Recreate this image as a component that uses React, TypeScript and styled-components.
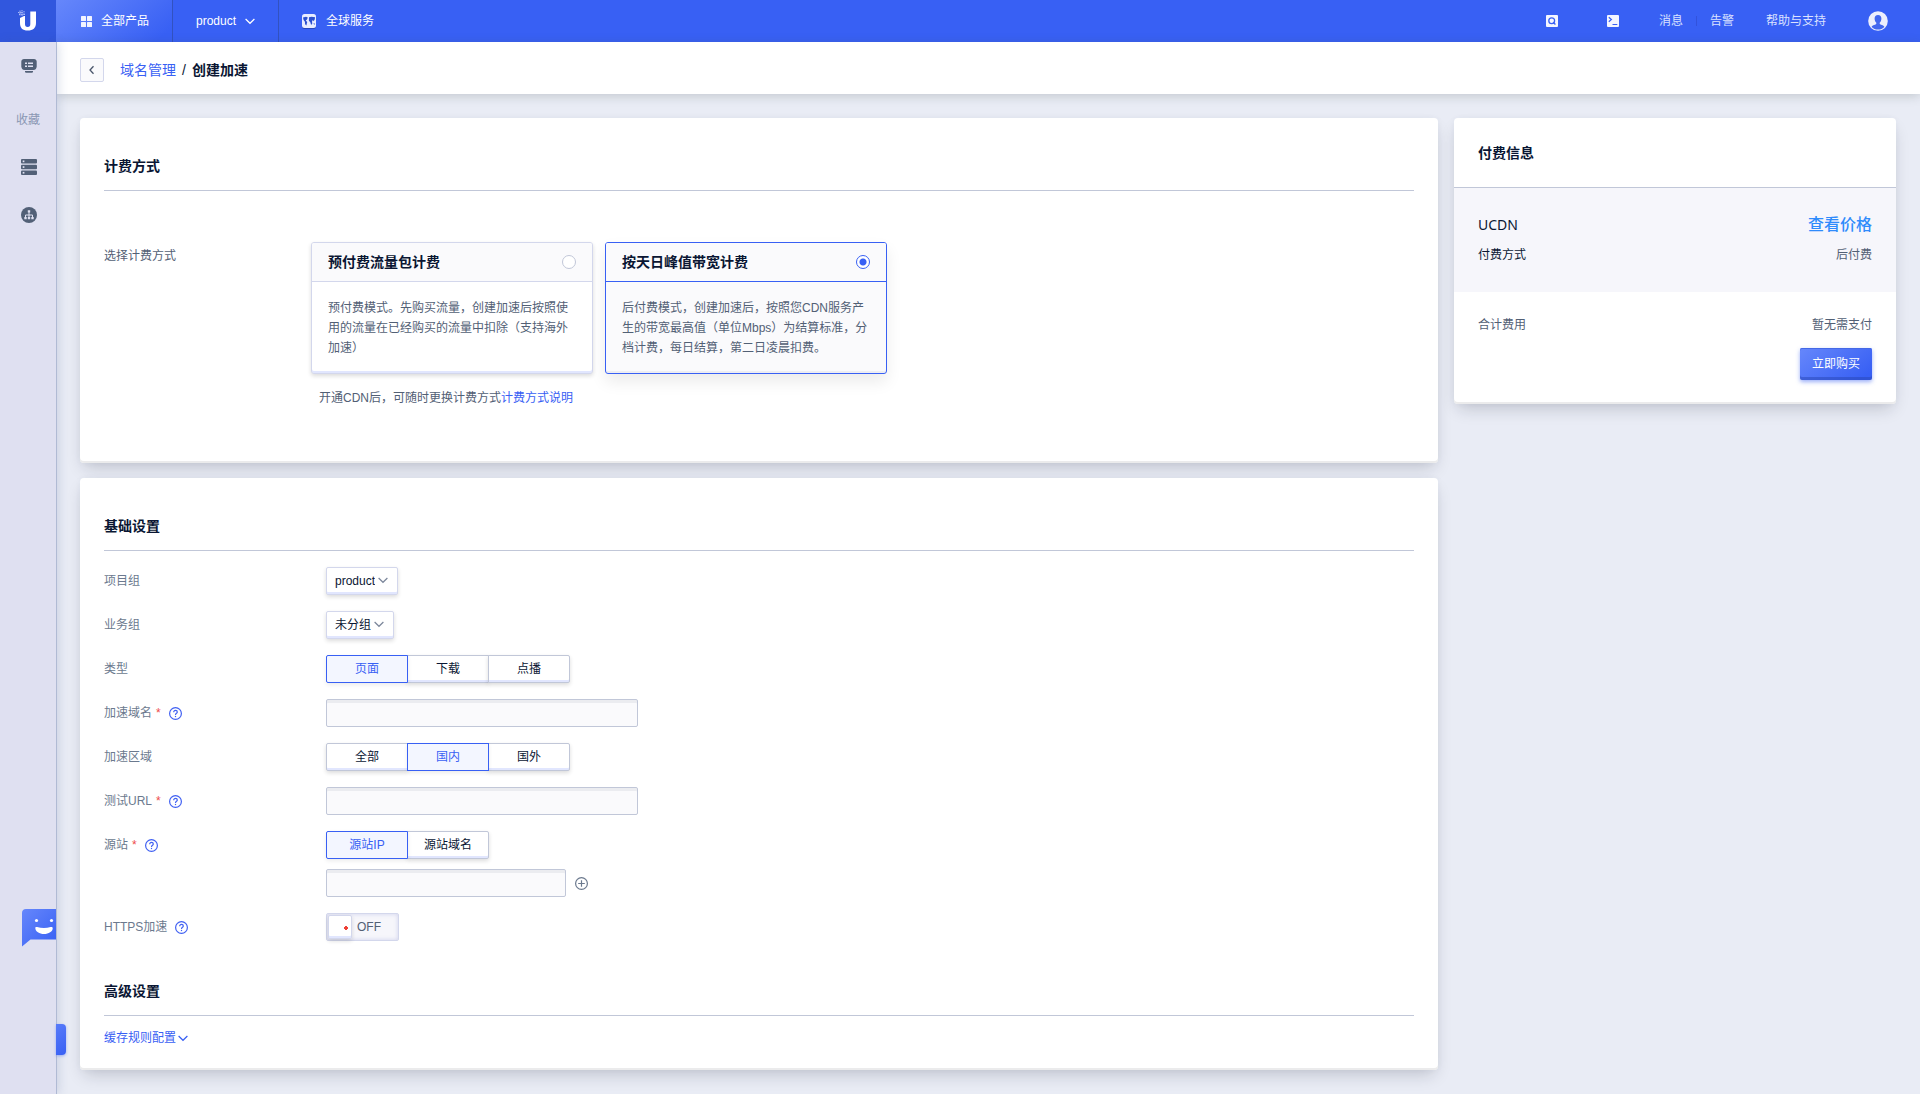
import React, { useState } from "react";
import styled, { createGlobalStyle, css } from "styled-components";

const color = {
  brand: "#3860f4",
  brandDark: "#3157de",
  link: "#3860f4",
  ink: "#0a1633",
  text: "#526075",
  muted: "#6b798e",
  line: "#c1c7d8",
  soft: "#d3d7ec",
  lip: "#e1e6fe",
  field: "#fafafc",
};

const brandGradient = "linear-gradient(140deg, #6687fb 0%, #3860f4 90%)";

const GlobalStyle = createGlobalStyle`
  *, *::before, *::after { box-sizing: border-box; }
  body {
    margin: 0;
    background: #e9ecf5;
    color: ${color.text};
    font-family: "Liberation Sans", "Noto Sans CJK SC", sans-serif;
    font-size: 12px;
    line-height: 20px;
  }
  button, input, select { font: inherit; color: inherit; }
  a { color: ${color.link}; text-decoration: none; }
  h1, h2, p { margin: 0; }
  svg { display: block; flex: none; }
`;

const Page = styled.div`
  display: flex;
  flex-direction: column;
  min-height: 100vh;
`;

const TopBar = styled.header`
  display: flex;
  height: 42px;
  background: ${color.brand};
  color: #e8ecff;
`;

const Logo = styled.a`
  display: flex;
  align-items: center;
  justify-content: center;
  width: 56px;
  background: ${color.brandDark};
`;

const TopButton = styled.button<{ $lit?: boolean; $divided?: boolean }>`
  display: flex;
  align-items: center;
  gap: 9px;
  padding: 0 23px;
  border: 0;
  border-right: ${(p) => (p.$divided ? "1px solid #3252c0" : "0")};
  background: ${(p) => (p.$lit ? brandGradient : "none")};
  color: #fff;
`;

const TopTools = styled.nav`
  display: flex;
  align-items: center;
  margin-left: auto;
  padding-right: 32px;
`;

const ToolButton = styled.button`
  display: flex;
  align-items: center;
  justify-content: center;
  width: 61px;
  height: 42px;
  padding: 0;
  border: 0;
  background: none;
`;

const ToolLinks = styled.div`
  display: flex;
  align-items: center;
  padding: 0 42px 0 15px;
`;

const ToolLink = styled.a<{ $wide?: boolean }>`
  color: #dbe2ff;
  margin-left: ${(p) => (p.$wide ? "32px" : "0")};
`;

const ToolDivider = styled.span`
  width: 1px;
  height: 10px;
  margin: 0 13px;
  background: #3252dc;
`;

const AvatarButton = styled.button`
  display: flex;
  padding: 0;
  border: 0;
  background: none;
`;

const Shell = styled.div`
  display: flex;
  flex: 1;
`;

const SideBar = styled.aside`
  position: relative;
  z-index: 2;
  display: flex;
  flex-direction: column;
  align-items: center;
  flex: none;
  width: 56px;
  background: #dfe0f1;
  box-shadow: 1px 0 0 #b0bad4, 2px 0 10px rgba(60, 80, 140, 0.2);
`;

const SideItem = styled.a`
  display: flex;
  align-items: center;
  justify-content: center;
  width: 100%;
  height: 48px;
  padding-left: 2px;
  color: #526077;
`;

const SideCaption = styled.span`
  padding: 20px 0 13px;
  color: #8a97b3;
`;

const ChatBubble = styled.button`
  position: absolute;
  right: 0;
  bottom: 146px;
  width: 34px;
  height: 40px;
  padding: 0;
  border: 0;
  background: none;
`;

const DrawerTab = styled.button`
  position: absolute;
  left: 56px;
  bottom: 39px;
  width: 10px;
  height: 31px;
  padding: 0;
  border: 0;
  border-radius: 0 4px 4px 0;
  background: linear-gradient(140deg, #587bf9, #3860f4);
  box-shadow: 0 1px 3px rgba(56, 96, 244, 0.4);
`;

const Main = styled.main`
  flex: 1;
  min-width: 0;
`;

const CrumbBar = styled.div`
  display: flex;
  align-items: center;
  height: 52px;
  padding: 4px 24px 0;
  background: #fff;
  box-shadow: 0 2px 10px rgba(60, 75, 70, 0.22);
  color: ${color.ink};
  font-size: 14px;
`;

const BackButton = styled.button`
  display: flex;
  align-items: center;
  justify-content: center;
  width: 24px;
  height: 24px;
  margin-right: 16px;
  padding: 0;
  border: 1px solid ${color.soft};
  border-radius: 2px;
  background: ${color.field};
`;

const Slash = styled.span`
  margin: 0 6px;
`;

const CrumbTitle = styled.h1`
  font-size: 14px;
  font-weight: 700;
`;

const Columns = styled.div`
  display: flex;
  align-items: flex-start;
  gap: 16px;
  padding: 24px;
`;

const Forms = styled.div`
  display: flex;
  flex-direction: column;
  flex: 1;
  gap: 15px;
  min-width: 0;
`;

const cardLook = css`
  border-radius: 4px;
  background: #fff;
  box-shadow: inset 0 -2px 0 #ebebec, 0 8px 16px -4px rgba(20, 24, 45, 0.2),
    0 0 6px rgba(60, 70, 100, 0.04);
`;

const Card = styled.section<{ $roomy?: boolean }>`
  ${cardLook}
  padding: ${(p) => (p.$roomy ? "36px 24px 55px" : "36px 24px 22px")};
`;

const SectionTitle = styled.h2<{ $later?: boolean }>`
  margin-top: ${(p) => (p.$later ? "40px" : "0")};
  padding: ${(p) => (p.$later ? "0 0 14px" : "2px 0 14px")};
  border-bottom: 1px solid ${color.line};
  color: ${color.ink};
  font-size: 14px;
  font-weight: 700;
`;

const PlanRow = styled.fieldset`
  display: grid;
  grid-template-columns: 207px 1fr;
  margin: 0;
  padding: 51px 0 0;
  border: 0;
`;

const PlanLabel = styled.span`
  padding-top: 4px;
`;

const Plans = styled.div`
  display: flex;
  flex-wrap: wrap;
  gap: 12px;
`;

const PlanCard = styled.label<{ $on: boolean }>`
  width: 282px;
  overflow: hidden;
  border: 1px solid ${(p) => (p.$on ? color.brand : color.soft)};
  border-radius: 3px;
  background: ${(p) => (p.$on ? color.field : "#fff")};
  box-shadow: ${(p) =>
    p.$on
      ? "inset 0 -2px 0 #eeeef2, 0 8px 16px rgba(0, 0, 0, 0.08)"
      : "inset 0 -2px 0 #e1e6fe, 0 2px 4px rgba(0, 0, 0, 0.14)"};
  cursor: pointer;
`;

const PlanHead = styled.span<{ $on: boolean }>`
  display: flex;
  align-items: center;
  justify-content: space-between;
  height: 39px;
  padding: 0 16px;
  border-bottom: 1px solid ${(p) => (p.$on ? color.brand : color.soft)};
  background: ${color.field};
  color: ${color.ink};
  font-size: 14px;
  font-weight: 700;
`;

const Radio = styled.input`
  appearance: none;
  width: 14px;
  height: 14px;
  margin: 0;
  border: 1px solid ${color.line};
  border-radius: 50%;
  background: #fff;
  &:checked {
    border-color: ${color.brand};
    background: radial-gradient(circle, ${color.brand} 3px, #fff 4px);
  }
`;

const PlanText = styled.span`
  display: block;
  padding: 16px 16px 15px;
`;

const PlanNote = styled.p`
  padding: 14px 8px 0;
`;

const Field = styled.div`
  display: grid;
  grid-template-columns: 222px 1fr;
  align-items: start;
  margin-top: 16px;
`;

const FieldLabel = styled.label`
  display: flex;
  align-items: center;
  height: 28px;
  color: ${color.muted};
`;

const Star = styled.span`
  margin-left: 4px;
  color: #ee4b4b;
`;

const Help = styled.button`
  display: flex;
  margin-left: 8px;
  padding: 0;
  border: 0;
  background: none;
`;

const raised = css`
  background: #fff;
  box-shadow: inset 0 -2px 0 ${color.lip}, 0 2px 4px rgba(0, 0, 0, 0.14);
`;

const SelectBox = styled.span`
  display: inline-grid;
  justify-self: start;
  align-items: center;
  > * {
    grid-area: 1 / 1;
  }
  > svg {
    justify-self: end;
    margin: 0 10px 3px 0;
    pointer-events: none;
  }
`;

const Select = styled.select`
  ${raised}
  appearance: none;
  field-sizing: content;
  height: 28px;
  padding: 0 22px 0 8px;
  border: 1px solid ${color.soft};
  border-radius: 2px;
  color: ${color.ink};
`;

const Segments = styled.div`
  display: flex;
`;

const Segment = styled.button<{ $on: boolean }>`
  ${raised}
  width: 82px;
  height: 28px;
  padding: 0;
  border: 1px solid ${color.line};
  color: ${color.ink};
  &:first-child {
    border-radius: 2px 0 0 2px;
  }
  &:last-child {
    border-radius: 0 2px 2px 0;
  }
  & + & {
    margin-left: -1px;
  }
  ${(p) =>
    p.$on &&
    css`
      z-index: 1;
      position: relative;
      border-color: ${color.brand};
      background: #f3f6ff;
      box-shadow: 0 2px 4px rgba(0, 0, 0, 0.08);
      color: ${color.brand};
    `}
`;

const TextInput = styled.input<{ $short?: boolean }>`
  width: ${(p) => (p.$short ? "240px" : "312px")};
  height: 28px;
  padding: 0 8px;
  border: 1px solid ${color.line};
  border-radius: 2px;
  outline: 0;
  background: ${color.field};
  box-shadow: inset 0 3px 0 #ebecf0;
`;

const Stack = styled.div`
  display: grid;
  gap: 10px;
`;

const InputLine = styled.div`
  display: flex;
  align-items: center;
  gap: 9px;
`;

const IconButton = styled.button`
  display: flex;
  padding: 0;
  border: 0;
  background: none;
`;

const Switch = styled.label`
  display: flex;
  align-items: center;
  justify-self: start;
  gap: 5px;
  width: 73px;
  height: 28px;
  padding: 0 1px;
  border: 1px solid ${color.soft};
  border-radius: 2px;
  background: #f6f6fb;
  box-shadow: inset 0 0 4px rgba(90, 100, 190, 0.25);
  cursor: pointer;
`;

const SwitchKnob = styled.input`
  ${raised}
  appearance: none;
  width: 24px;
  height: 24px;
  margin: 0;
  border: 1px solid ${color.soft};
  border-radius: 2px;
  background: radial-gradient(circle at 17px 12px, #ee4036 2px, #fff 2px);
  &:checked {
    background: radial-gradient(circle at 6px 12px, #2fbf71 2px, #fff 2px);
  }
`;

const MoreButton = styled.button`
  display: flex;
  align-items: center;
  gap: 2px;
  margin-top: 12px;
  padding: 0;
  border: 0;
  background: none;
  color: ${color.link};
`;

const Bill = styled.aside`
  ${cardLook}
  flex: none;
  width: 442px;
`;

const BillTitle = styled.h2`
  padding: 25px 24px 24px;
  border-bottom: 1px solid ${color.line};
  color: ${color.ink};
  font-size: 14px;
  font-weight: 700;
`;

const BillBody = styled.div`
  display: grid;
  gap: 10px;
  padding: 27px 24px;
  background: #f6f6fb;
  color: ${color.ink};
`;

const BillLine = styled.div`
  display: flex;
  align-items: center;
  justify-content: space-between;
`;

const ProductName = styled.span`
  font-family: "Noto Sans", sans-serif;
  font-size: 14px;
`;

const PriceLink = styled.a`
  color: #2f8bfb;
  font-size: 16px;
  font-weight: 500;
`;

const Quiet = styled.span`
  color: ${color.text};
`;

const BillFoot = styled.div`
  display: grid;
  gap: 13px;
  padding: 23px 24px 24px;
`;

const BuyButton = styled.button`
  justify-self: end;
  width: 72px;
  height: 32px;
  padding: 0 0 1px;
  border: 0;
  border-radius: 2px;
  background: ${brandGradient};
  box-shadow: inset 0 -3px 0 rgba(40, 70, 180, 0.5), inset 0 1px 0 #4468e6,
    0 2px 4px rgba(56, 96, 244, 0.5);
  color: #fff;
`;

const Chevron = ({ size = 10, stroke = "#7c879b" }) => (
  <svg width={size} height={size} viewBox="0 0 10 10" fill="none" stroke={stroke} strokeWidth="1.200">
    <path d="M0.600 3L5 7.300 9.400 3" />
  </svg>
);

const LogoMark = () => (
  <svg width="20" height="22" viewBox="0 0 20 22">
    <path
      d="M2 8l4-2h1v8c0 2 .8 3 2.700 3s2.600-1 2.600-3V1.500H18V13c0 5-3 7.500-8.200 7.500S2 18 2 13z"
      fill="#fff"
    />
    <path
      d="M2 .5v5M4 0v6M6 1v4M0 2.500h5M1 4.500h6"
      stroke="#c6d2ff"
      strokeWidth="0.800"
      strokeDasharray="1.500 0.700"
    />
  </svg>
);

const GridIcon = () => (
  <svg width="13" height="11" viewBox="-2 0 13 11" fill="#f2f4ff">
    <rect width="5" height="5" rx="0.500" />
    <rect x="6" width="5" height="5" rx="0.500" />
    <rect y="6" width="5" height="5" rx="0.500" />
    <rect x="6" y="6" width="5" height="5" rx="0.500" />
  </svg>
);

const MapIcon = () => (
  <svg width="15" height="15" viewBox="0 0 15 15">
    <rect y="1" width="14" height="14" rx="2.500" fill="#2747bb" />
    <rect width="14" height="14" rx="2.500" fill="#e9edff" />
    <path
      d="M1 3.500l3-.7 1.800.8-.8 1.900-1.200.9 1.400 1.600-.8 3.400-1.300-1.200-.2-2.500L1.600 6zM7 3.300l2.500-.6 3.600.5-.4 2.300-1 1.700-.9-1.300-.8 1.500.3 2.200-1.200 1.300-.8-2.600-1.400-1.500zM11.400 9.200l1.500.3-.6 1.500z"
      fill="#2c50cf"
    />
  </svg>
);

const SearchIcon = () => (
  <svg width="12" height="12" viewBox="0 0 12 12">
    <rect width="12" height="12" rx="1" fill="#f4f6ff" />
    <circle cx="5.700" cy="5.700" r="2.900" fill="none" stroke="#3860f4" strokeWidth="1.300" />
    <path d="M7.200 7.200l2.200 2.300" stroke="#3860f4" strokeWidth="1.300" />
  </svg>
);

const TerminalIcon = () => (
  <svg width="12" height="12" viewBox="0 0 12 12">
    <rect width="12" height="12" rx="1" fill="#f4f6ff" />
    <path d="M1.800 2.200l2.600 2.300-2.600 2.300M5.500 9.500h4.800" fill="none" stroke="#3860f4" strokeWidth="1.200" />
  </svg>
);

const AvatarIcon = () => (
  <svg width="20" height="20" viewBox="0 0 20 20">
    <circle cx="10" cy="10" r="9.800" fill="#eceffc" />
    <path
      d="M10 4c2.200 0 3.500 1.400 3.400 3.700-.1 1.900-.8 3.200-1.700 4v1c.3 1 4 1.200 4.700 3.300C14.800 17.700 12.500 18.600 10 18.600S5.200 17.700 3.600 16c.7-2.100 4.400-2.300 4.700-3.300v-1c-.9-.8-1.600-2.100-1.700-4C6.500 5.400 7.800 4 10 4z"
      fill="#4267ee"
    />
  </svg>
);

const MonitorIcon = () => (
  <svg width="16" height="15" viewBox="0 0 16 15">
    <path
      d="M3 0h10c1.600 0 2.600 1 2.700 2.700v4.600C15.600 9.500 14.500 11 12.500 11h-9C1.500 11 .4 9.500.3 7.300V2.700C.4 1 1.400 0 3 0z"
      fill="currentColor"
    />
    <path d="M4 12h8v1.200l-1.200.6H5.200L4 13.200z" fill="currentColor" />
    <path d="M4 4.200h2M7 4.200h5M4 7.200h2M7 7.200h5" stroke="#dfe0f1" strokeWidth="1.400" />
  </svg>
);

const ServerIcon = () => (
  <svg width="16" height="16" viewBox="0 0 16 16">
    {[0, 5.700, 11.400].map((y) => (
      <g key={y}>
        <rect y={y} width="16" height="4.600" rx="1" fill="currentColor" />
        <rect x="1.700" y={y + 1.500} width="1.700" height="1.700" fill="#dfe0f1" />
      </g>
    ))}
  </svg>
);

const NetworkIcon = () => (
  <svg width="16" height="16" viewBox="0 0 16 16">
    <circle cx="8" cy="8" r="8" fill="currentColor" />
    <path d="M8 4.500V11M4.500 11V8h7v3" fill="none" stroke="#dfe0f1" />
    <path
      d="M6.800 3.200h2.400v2.300H6.800zM3.300 10h2.400v2.200H3.300zM6.800 10h2.400v2.200H6.800zM10.300 10h2.400v2.200h-2.400z"
      fill="#dfe0f1"
    />
  </svg>
);

const ChatIcon = () => (
  <svg width="34" height="40" viewBox="0 0 34 40">
    <defs>
      <linearGradient id="chat" x1="0" y1="0" x2="1" y2="1">
        <stop offset="0" stopColor="#6687fb" />
        <stop offset="1" stopColor="#3860f4" />
      </linearGradient>
    </defs>
    <path d="M4 1h30v30.500H8.500L0 38.500V5c0-2.500 1.500-4 4-4z" fill="url(#chat)" />
    <circle cx="14.500" cy="12.500" r="1.600" fill="#fff" />
    <circle cx="29.500" cy="12.500" r="1.600" fill="#fff" />
    <path
      d="M13.300 20c0-1 .9-1.300 1.800-.9 4.300 1.300 9.200 1.300 13.500 0 1-.3 2 0 2.100.9.300 3.500-4.200 6-8.700 6s-8.700-2.500-8.700-6z"
      fill="#fff"
    />
  </svg>
);

const HelpIcon = () => (
  <svg width="13" height="13" viewBox="0 0 13 13" fill="none" stroke="#4060f2" strokeWidth="1.200">
    <circle cx="6.500" cy="6.500" r="5.900" />
    <path d="M4.700 5.200c0-1.200.8-1.800 1.800-1.800s1.800.6 1.800 1.600c0 1.300-1.800 1.400-1.800 2.900" />
    <path d="M6.500 8.900v1.200" />
  </svg>
);

const PlusIcon = () => (
  <svg width="13" height="13" viewBox="0 0 13 13" fill="none" stroke="#6b798e" strokeWidth="1.200">
    <circle cx="6.500" cy="6.500" r="5.900" />
    <path d="M6.500 3.200v6.600M3.200 6.500h6.600" />
  </svg>
);

const plans = [
  {
    id: "traffic",
    title: "预付费流量包计费",
    text: "预付费模式。先购买流量，创建加速后按照使用的流量在已经购买的流量中扣除（支持海外加速）",
  },
  {
    id: "peak",
    title: "按天日峰值带宽计费",
    text: "后付费模式，创建加速后，按照您CDN服务产生的带宽最高值（单位Mbps）为结算标准，分档计费，每日结算，第二日凌晨扣费。",
  },
];

function Label(props: { text: string; htmlFor?: string; id?: string; required?: boolean; help?: boolean }) {
  return (
    <FieldLabel htmlFor={props.htmlFor} id={props.id} as={props.htmlFor ? "label" : "span"}>
      {props.text}
      {props.required && <Star>*</Star>}
      {props.help && (
        <Help type="button" aria-label={`${props.text}说明`}>
          <HelpIcon />
        </Help>
      )}
    </FieldLabel>
  );
}

function Choice(props: { labelledBy: string; options: string[]; initial: string }) {
  const [value, setValue] = useState(props.initial);
  return (
    <Segments role="group" aria-labelledby={props.labelledBy}>
      {props.options.map((o) => (
        <Segment key={o} type="button" $on={o === value} aria-pressed={o === value} onClick={() => setValue(o)}>
          {o}
        </Segment>
      ))}
    </Segments>
  );
}

export default function App() {
  const [plan, setPlan] = useState("peak");
  const [https, setHttps] = useState(false);

  return (
    <Page>
      <GlobalStyle />
      <TopBar>
        <Logo href="#" aria-label="UCloud">
          <LogoMark />
        </Logo>
        <TopButton $lit $divided>
          <GridIcon />
          全部产品
        </TopButton>
        <TopButton $divided>
          product
          <Chevron stroke="#fff" />
        </TopButton>
        <TopButton>
          <MapIcon />
          全球服务
        </TopButton>
        <TopTools>
          <ToolButton aria-label="搜索">
            <SearchIcon />
          </ToolButton>
          <ToolButton aria-label="终端">
            <TerminalIcon />
          </ToolButton>
          <ToolLinks>
            <ToolLink href="#">消息</ToolLink>
            <ToolDivider />
            <ToolLink href="#">告警</ToolLink>
            <ToolLink href="#" $wide>
              帮助与支持
            </ToolLink>
          </ToolLinks>
          <AvatarButton aria-label="账户">
            <AvatarIcon />
          </AvatarButton>
        </TopTools>
      </TopBar>

      <Shell>
        <SideBar>
          <SideItem href="#" aria-label="控制台">
            <MonitorIcon />
          </SideItem>
          <SideCaption>收藏</SideCaption>
          <SideItem href="#" aria-label="主机">
            <ServerIcon />
          </SideItem>
          <SideItem href="#" aria-label="网络">
            <NetworkIcon />
          </SideItem>
          <ChatBubble aria-label="在线咨询">
            <ChatIcon />
          </ChatBubble>
          <DrawerTab aria-label="展开" />
        </SideBar>

        <Main>
          <CrumbBar>
            <BackButton aria-label="返回">
              <svg width="10" height="10" viewBox="0 0 10 10" fill="none" stroke="#4a566b" strokeWidth="1.300">
                <path d="M6.500 1.200L3 5l3.500 3.800" />
              </svg>
            </BackButton>
            <a href="#">域名管理</a>
            <Slash>/</Slash>
            <CrumbTitle>创建加速</CrumbTitle>
          </CrumbBar>

          <Columns>
            <Forms>
              <Card $roomy>
                <SectionTitle>计费方式</SectionTitle>
                <PlanRow aria-labelledby="plan-label">
                  <PlanLabel id="plan-label">选择计费方式</PlanLabel>
                  <div>
                    <Plans>
                      {plans.map((p) => (
                        <PlanCard key={p.id} $on={p.id === plan}>
                          <PlanHead $on={p.id === plan}>
                            {p.title}
                            <Radio type="radio" name="plan" checked={p.id === plan} onChange={() => setPlan(p.id)} />
                          </PlanHead>
                          <PlanText>{p.text}</PlanText>
                        </PlanCard>
                      ))}
                    </Plans>
                    <PlanNote>
                      开通CDN后，可随时更换计费方式<a href="#">计费方式说明</a>
                    </PlanNote>
                  </div>
                </PlanRow>
              </Card>

              <Card>
                <SectionTitle>基础设置</SectionTitle>
                <Field>
                  <Label text="项目组" htmlFor="project" />
                  <SelectBox>
                    <Select id="project">
                      <option>product</option>
                    </Select>
                    <Chevron />
                  </SelectBox>
                </Field>
                <Field>
                  <Label text="业务组" htmlFor="group" />
                  <SelectBox>
                    <Select id="group">
                      <option>未分组</option>
                    </Select>
                    <Chevron />
                  </SelectBox>
                </Field>
                <Field>
                  <Label text="类型" id="kind" />
                  <Choice labelledBy="kind" options={["页面", "下载", "点播"]} initial="页面" />
                </Field>
                <Field>
                  <Label text="加速域名" htmlFor="domain" required help />
                  <TextInput id="domain" />
                </Field>
                <Field>
                  <Label text="加速区域" id="area" />
                  <Choice labelledBy="area" options={["全部", "国内", "国外"]} initial="国内" />
                </Field>
                <Field>
                  <Label text="测试URL" htmlFor="url" required help />
                  <TextInput id="url" />
                </Field>
                <Field>
                  <Label text="源站" id="origin" required help />
                  <Stack>
                    <Choice labelledBy="origin" options={["源站IP", "源站域名"]} initial="源站IP" />
                    <InputLine>
                      <TextInput $short aria-labelledby="origin" />
                      <IconButton type="button" aria-label="添加源站">
                        <PlusIcon />
                      </IconButton>
                    </InputLine>
                  </Stack>
                </Field>
                <Field>
                  <Label text="HTTPS加速" htmlFor="https" help />
                  <Switch>
                    <SwitchKnob
                      id="https"
                      type="checkbox"
                      role="switch"
                      checked={https}
                      onChange={(e) => setHttps(e.target.checked)}
                    />
                    {https ? "ON" : "OFF"}
                  </Switch>
                </Field>

                <SectionTitle $later>高级设置</SectionTitle>
                <MoreButton type="button">
                  缓存规则配置
                  <Chevron stroke={color.link} />
                </MoreButton>
              </Card>
            </Forms>

            <Bill>
              <BillTitle>付费信息</BillTitle>
              <BillBody>
                <BillLine>
                  <ProductName>UCDN</ProductName>
                  <PriceLink href="#">查看价格</PriceLink>
                </BillLine>
                <BillLine>
                  <span>付费方式</span>
                  <Quiet>后付费</Quiet>
                </BillLine>
              </BillBody>
              <BillFoot>
                <BillLine>
                  <span>合计费用</span>
                  <span>暂无需支付</span>
                </BillLine>
                <BuyButton type="button">立即购买</BuyButton>
              </BillFoot>
            </Bill>
          </Columns>
        </Main>
      </Shell>
    </Page>
  );
}
